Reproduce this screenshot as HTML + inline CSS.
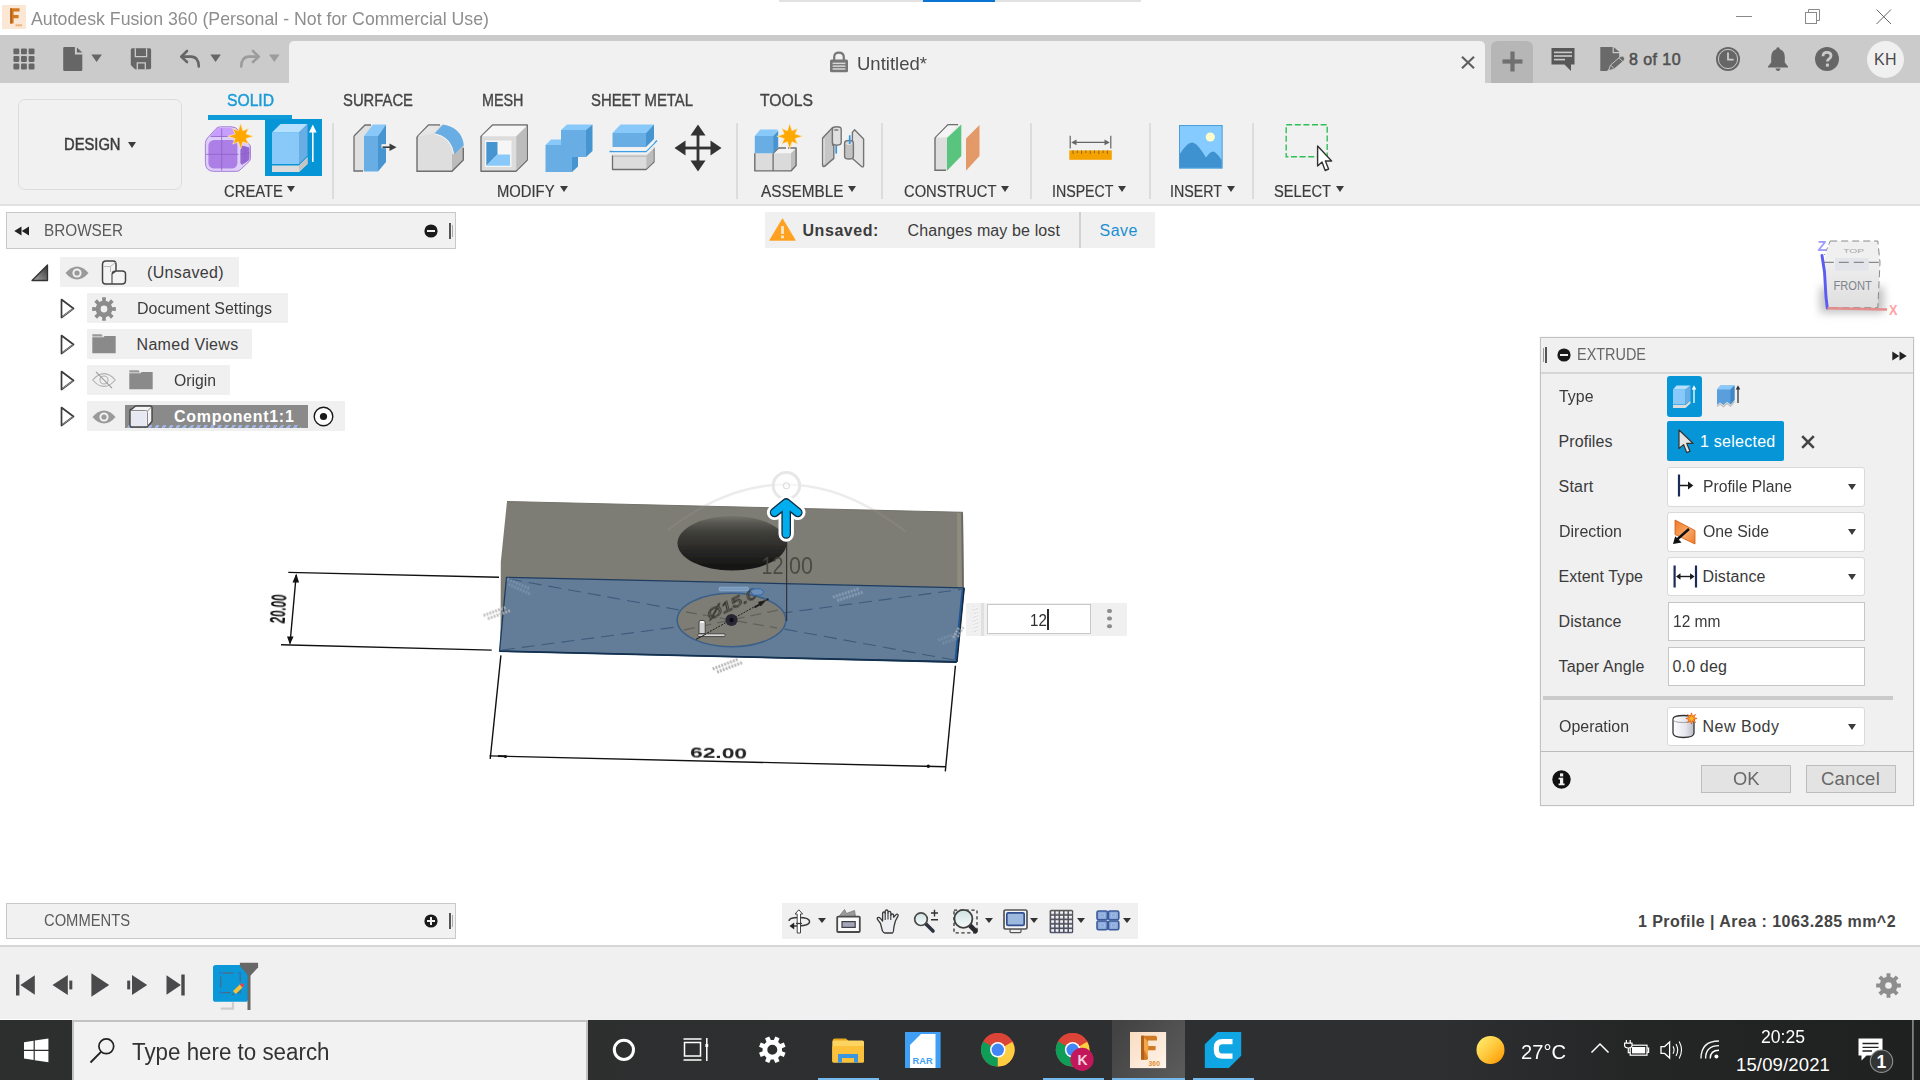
<!DOCTYPE html>
<html><head><meta charset="utf-8">
<style>
*{box-sizing:border-box;margin:0;padding:0}
html,body{width:1920px;height:1080px;overflow:hidden;background:#fff}
body{font-family:"Liberation Sans",sans-serif;position:relative;color:#3c3c3c}
.a{position:absolute}
.t{position:absolute;white-space:nowrap;line-height:1;transform-origin:0 50%}
svg{position:absolute;overflow:visible}
.sep{position:absolute;width:2px;background:#dcdcdc;top:123px;height:76px}
.dd{position:absolute;left:1666.6px;width:198.4px;height:40px;background:#fff;border:1.6px solid #d9d9d9;border-radius:3px}
.lbl{position:absolute;left:1558px;font-size:16px;white-space:nowrap;line-height:1;color:#3a3a3a}
.car{position:absolute;width:0;height:0;border-left:4.5px solid transparent;border-right:4.5px solid transparent;border-top:6px solid #3c3c3c}
</style></head><body>

<!-- ===== TITLE BAR ===== -->
<div class="a" id="titlebar" style="left:0;top:0;width:1920px;height:35px;background:#fff"></div>
<div class="a" style="left:779px;top:0;width:362px;height:2px;background:#e2e2e2"></div>
<div class="a" style="left:923px;top:0;width:72px;height:2px;background:#0a74d4"></div>

<div class="a" style="left:2px;top:5px;width:24px;height:24px;background:#fbe7d6"></div>
<svg style="left:2px;top:5px" width="24" height="24" viewBox="0 0 24 24"><path d="M8.2 3.2 H17.6 V6.6 H11.6 V10 H16.6 V13.2 H11.6 V18.6 H8.2 Z" fill="#d27a22"></path><path d="M8.2 3.2 H10 V18.6 H8.2Z" fill="#b8621a"></path><rect x="13.5" y="19.3" width="6.5" height="2" fill="#eeb47a"></rect></svg>
<span class="t" style="font-size: 19px; color: rgb(142, 142, 142); letter-spacing: 0px; left: 31px; transform: scaleX(0.9327); top: 9.3px;">Autodesk Fusion 360 (Personal - Not for Commercial Use)</span>
<div class="a" style="left:1736px;top:16px;width:16px;height:1px;background:#8a8a8a"></div>
<svg style="left:1804px;top:8px" width="18" height="18" viewBox="0 0 18 18" fill="none" stroke="#8a8a8a" stroke-width="1"><rect x="1.5" y="4.5" width="11" height="11"></rect><path d="M4.5 4.5V1.5H15.5V12.5H12.5"></path></svg>
<svg style="left:1875px;top:8px" width="18" height="18" viewBox="0 0 18 18" fill="none" stroke="#666" stroke-width="1"><path d="M1.5 1.5L16 16M16 1.5L1.5 16"></path></svg>


<!-- ===== GREY BAND / TABS ===== -->
<div class="a" style="left:0;top:35px;width:1920px;height:48px;background:#cbcbcb"></div>
<div class="a" style="left:289px;top:40.7px;width:1196px;height:42.3px;background:#f1f1f1;border-radius:5px 5px 0 0"></div>
<div class="a" style="left:1491px;top:41px;width:42px;height:42px;background:#b6b6b6;border-radius:6px 6px 0 0"></div>

<!-- grid -->
<svg style="left:0;top:40px" width="300" height="40" viewBox="0 40 300 40">
<g fill="#666"><rect x="13.4" y="48.4" width="5.9" height="5.9" rx="1.1"></rect><rect x="21" y="48.4" width="5.9" height="5.9" rx="1.1"></rect><rect x="28.6" y="48.4" width="5.9" height="5.9" rx="1.1"></rect><rect x="13.4" y="56" width="5.9" height="5.9" rx="1.1"></rect><rect x="21" y="56" width="5.9" height="5.9" rx="1.1"></rect><rect x="28.6" y="56" width="5.9" height="5.9" rx="1.1"></rect><rect x="13.4" y="63.6" width="5.9" height="5.9" rx="1.1"></rect><rect x="21" y="63.6" width="5.9" height="5.9" rx="1.1"></rect><rect x="28.6" y="63.6" width="5.9" height="5.9" rx="1.1"></rect></g>
<path d="M64.4 47H74.9V54.5H82.3V69.7Q82.3 70.9 81.1 70.9H64.4Q63.2 70.9 63.2 69.7V48.2Q63.2 47 64.4 47Z" fill="#666"></path><path d="M76.9 47.4L82.3 52.6H76.9Z" fill="#666"></path>
<path d="M91.3 54.6H101.9L96.6 62Z" fill="#666"></path>
<path d="M132.4 48.2H149.5Q151.1 48.2 151.1 49.8V67.7Q151.1 69.3 149.5 69.3H135L130.8 65V49.8Q130.8 48.2 132.4 48.2Z" fill="#666"></path>
<path d="M135.3 48.2V56.6H146.6V48.2M137.3 69.3V62.9H145.3V69.3" fill="none" stroke="#cbcbcb" stroke-width="1.3"></path>
<g fill="none" stroke="#666" stroke-width="2.6" stroke-linecap="round" stroke-linejoin="round"><path d="M187 51L181.2 56.6L187 62"></path><path d="M182 56.6H191.5Q198.5 57 198.8 66.5"></path></g>
<path d="M210.3 54.6H220.9L215.6 62Z" fill="#666"></path>
<g fill="none" stroke="#9c9c9c" stroke-width="2.6" stroke-linecap="round" stroke-linejoin="round"><path d="M253 51L258.8 56.6L253 62"></path><path d="M258 56.6H248.5Q241.5 57 241.2 66.5"></path></g>
<path d="M269 54.6H279.6L274.3 62Z" fill="#9c9c9c"></path>
</svg>
<!-- doc tab content -->
<svg style="left:829px;top:51px" width="20" height="22" viewBox="0 0 20 22"><path d="M5.2 9V6.2Q5.2 1.6 10 1.6Q14.8 1.6 14.8 6.2V9" fill="none" stroke="#777" stroke-width="2.2"></path><rect x="1" y="8.6" width="18" height="12.6" rx="1.5" fill="#777"></rect><rect x="3.6" y="11.6" width="12.8" height="1.5" fill="#d8d8d8"></rect><rect x="3.6" y="14.4" width="12.8" height="1.5" fill="#d8d8d8"></rect><rect x="3.6" y="17.2" width="12.8" height="1.5" fill="#d8d8d8"></rect></svg>
<span class="t" style="font-size: 19px; color: rgb(74, 74, 74); letter-spacing: 0px; left: 857px; transform: scaleX(0.9745); top: 53.6px;">Untitled*</span>
<svg style="left:1461px;top:56px" width="14" height="13" viewBox="0 0 14 13" fill="none" stroke="#5e5e5e" stroke-width="2.1"><path d="M1 0.8L13 12.2M13 0.8L1 12.2"></path></svg>
<!-- plus -->
<svg style="left:1502px;top:51px" width="21" height="21" viewBox="0 0 21 21" fill="#707070"><rect x="8.4" y="0.5" width="4.2" height="20"></rect><rect x="0.5" y="8.4" width="20" height="4.2"></rect></svg>
<!-- comment -->
<svg style="left:1550px;top:47px" width="26" height="25" viewBox="0 0 26 25"><path d="M1.5 1H24.5V17.5H21V24L14.5 17.5H1.5Z" fill="#585858"></path><rect x="4" y="4.6" width="18" height="1.6" fill="#cbcbcb"></rect><rect x="4" y="8.2" width="18" height="1.6" fill="#cbcbcb"></rect><rect x="4" y="11.8" width="11" height="1.6" fill="#cbcbcb"></rect></svg>
<!-- doc pencil -->
<svg style="left:1590px;top:40px" width="50" height="40" viewBox="1590 40 50 40">
<path d="M1600.3 46.9H1612.6V53.2H1619.2V58L1607 70.9H1600.3Z" fill="#6a6a6a"></path>
<path d="M1613.8 47.2L1619.4 52H1613.8Z" fill="#6a6a6a"></path>
<path d="M1608.6 70.6L1610.4 65.2L1620.4 56.6Q1622.4 55.4 1624 57Q1625.4 58.8 1624 60.6L1614 69.2Z" fill="#6a6a6a" stroke="#cbcbcb" stroke-width="0.9" stroke-linejoin="round"></path>
<path d="M1619 57.8L1622.8 61.6M1610.6 65L1614.2 68.8" stroke="#cbcbcb" stroke-width="0.9"></path>
</svg>
<span class="t" style="font-size: 16px; color: rgb(80, 80, 80); -webkit-text-stroke: 0.55px rgb(80, 80, 80); letter-spacing: 0.438px; left: 1629px; top: 51.8px;">8 of 10</span>
<!-- clock -->
<svg style="left:1715px;top:46px" width="26" height="26" viewBox="0 0 26 26"><circle cx="13" cy="13" r="12" fill="#666"></circle><circle cx="13" cy="13" r="9.6" fill="none" stroke="#cbcbcb" stroke-width="1"></circle><path d="M13 6.4V13.6H18.6" fill="none" stroke="#cbcbcb" stroke-width="1.8"></path></svg>
<!-- bell -->
<svg style="left:1767px;top:46px" width="22" height="26" viewBox="0 0 22 26" fill="#666"><path d="M11 1.2Q12.8 1.2 12.8 3.2Q17.8 4.8 17.8 11V16.5L21 20.4V21.4H1V20.4L4.2 16.5V11Q4.2 4.8 9.2 3.2Q9.2 1.2 11 1.2Z"></path><path d="M8.4 22.6H13.6Q13.2 25 11 25Q8.8 25 8.4 22.6Z"></path></svg>
<!-- help -->
<svg style="left:1815px;top:47px" width="24" height="24" viewBox="0 0 24 24"><circle cx="12" cy="12" r="12" fill="#666"></circle><path d="M8 9.2Q8 5.4 12 5.4Q16 5.4 16 8.8Q16 10.8 14 11.9Q12.4 12.8 12.4 14.6" fill="none" stroke="#cbcbcb" stroke-width="2.8"></path><rect x="10.9" y="16.6" width="3" height="3" fill="#cbcbcb"></rect></svg>
<!-- avatar -->
<div class="a" style="left:1866.5px;top:40.5px;width:37px;height:37px;border-radius:50%;background:#f0f0f0"></div>
<span class="t" style="font-size: 16px; color: rgb(74, 74, 74); letter-spacing: 0.383px; left: 1874px; top: 51.8px;">KH</span>


<!-- ===== RIBBON ===== -->
<div class="a" style="left:0;top:83px;width:1920px;height:122px;background:#f1f1f1"></div>
<div class="a" style="left:0;top:204.3px;width:1920px;height:2.1px;background:#e2e2e2"></div>

<div class="a" style="left:17.5px;top:98.5px;width:164px;height:91px;border:1.5px solid #dcdcdc;border-radius:7px"></div>
<span class="t" style="font-size: 16px; color: rgb(60, 60, 60); -webkit-text-stroke: 0.5px rgb(60, 60, 60); letter-spacing: 0px; left: 63.5px; transform: scaleX(0.921); top: 137.3px;">DESIGN</span>
<div class="car" style="left:127.5px;top:142px"></div>
<span class="t" style="font-size: 16px; color: rgb(26, 155, 216); -webkit-text-stroke: 0.45px rgb(26, 155, 216); letter-spacing: 0px; left: 226.5px; transform: scaleX(0.9788); top: 93.2px;">SOLID</span>
<span class="t" style="font-size: 16px; color: rgb(69, 69, 69); -webkit-text-stroke: 0.35px rgb(69, 69, 69); letter-spacing: 0px; left: 342.5px; transform: scaleX(0.9262); top: 93.2px;">SURFACE</span>
<span class="t" style="font-size: 16px; color: rgb(69, 69, 69); -webkit-text-stroke: 0.35px rgb(69, 69, 69); letter-spacing: 0px; left: 481.5px; transform: scaleX(0.8976); top: 93.2px;">MESH</span>
<span class="t" style="font-size: 16px; color: rgb(69, 69, 69); -webkit-text-stroke: 0.35px rgb(69, 69, 69); letter-spacing: 0px; left: 591px; transform: scaleX(0.9302); top: 93.2px;">SHEET METAL</span>
<span class="t" style="font-size: 16px; color: rgb(69, 69, 69); -webkit-text-stroke: 0.35px rgb(69, 69, 69); letter-spacing: 0px; left: 760px; transform: scaleX(0.9823); top: 93.2px;">TOOLS</span>
<div class="a" style="left:207.5px;top:115px;width:84.5px;height:4.5px;background:#0e9bd8"></div>
<div class="a" style="left:265.4px;top:119px;width:57.1px;height:57px;background:#0696d7"></div>

<span class="t" style="font-size: 16px; color: rgb(60, 60, 60); -webkit-text-stroke: 0.2px rgb(60, 60, 60); letter-spacing: 0px; left: 224px; transform: scaleX(0.9259); top: 183.8px;">CREATE</span><div class="car" style="left:286.5px;top:186.4px"></div>
<span class="t" style="font-size: 16px; color: rgb(60, 60, 60); -webkit-text-stroke: 0.2px rgb(60, 60, 60); letter-spacing: 0px; left: 497px; transform: scaleX(0.9242); top: 183.8px;">MODIFY</span><div class="car" style="left:559.5px;top:186.4px"></div>
<span class="t" style="font-size: 16px; color: rgb(60, 60, 60); -webkit-text-stroke: 0.2px rgb(60, 60, 60); letter-spacing: 0px; left: 760.5px; transform: scaleX(0.9563); top: 183.8px;">ASSEMBLE</span><div class="car" style="left:847.5px;top:186.4px"></div>
<span class="t" style="font-size: 16px; color: rgb(60, 60, 60); -webkit-text-stroke: 0.2px rgb(60, 60, 60); letter-spacing: 0px; left: 903.5px; transform: scaleX(0.921); top: 183.8px;">CONSTRUCT</span><div class="car" style="left:1000.5px;top:186.4px"></div>
<span class="t" style="font-size: 16px; color: rgb(60, 60, 60); -webkit-text-stroke: 0.2px rgb(60, 60, 60); letter-spacing: 0px; left: 1051.5px; transform: scaleX(0.8869); top: 183.8px;">INSPECT</span><div class="car" style="left:1117.5px;top:186.4px"></div>
<span class="t" style="font-size: 16px; color: rgb(60, 60, 60); -webkit-text-stroke: 0.2px rgb(60, 60, 60); letter-spacing: 0px; left: 1170px; transform: scaleX(0.8906); top: 183.8px;">INSERT</span><div class="car" style="left:1227px;top:186.4px"></div>
<span class="t" style="font-size: 16px; color: rgb(60, 60, 60); -webkit-text-stroke: 0.2px rgb(60, 60, 60); letter-spacing: 0px; left: 1273.5px; transform: scaleX(0.9157); top: 183.8px;">SELECT</span><div class="car" style="left:1335.5px;top:186.4px"></div>

<div class="sep" style="left:332px"></div><div class="sep" style="left:735.5px"></div><div class="sep" style="left:880.5px"></div>
<div class="sep" style="left:1030px"></div><div class="sep" style="left:1148.5px"></div><div class="sep" style="left:1252px"></div>

<!-- Form -->
<svg style="left:200px;top:115px" width="60" height="65" viewBox="200 115 60 65">
<path d="M205.4 143.5Q205.4 140.5 207.5 138L216 128.6Q217.8 126.8 220.5 126.8H231Q236 126.8 238 130L250.4 146V158.3Q250.4 160 249 161.6L240 170Q238.6 171.3 236.5 171.3H214Q205.4 171.3 205.4 162.5Z" fill="#e0cefa" stroke="#a47cd6" stroke-width="1"></path>
<path d="M216 129.2Q217.2 128 219.5 128H230Q233 128 234 130L236.5 136.4H210Z" fill="#c79dff"></path>
<rect x="208.4" y="140" width="29" height="28.6" rx="5.6" fill="#ab7fe6"></rect>
<path d="M240.4 147Q240.4 145.2 242 145.6L249.4 147.6V158Q249.4 159.6 248.2 160.8L242.6 164.6Q240.4 165 240.4 162.6Z" fill="#9568d2"></path>
<path d="M221.7 128.4V170.6M206 154.3H238.6M240.4 154.3L249.6 152.8M245.2 146.6V162.6M210.6 136.6L236.6 136.4" stroke="#8e60c6" stroke-width="0.9" fill="none" opacity="0.9"></path>
<polygon points="240.6,123.5 242.9,130.8 248.4,128.5 246.1,134.0 253.4,136.3 246.1,138.6 248.4,144.1 242.9,141.8 240.6,149.1 238.3,141.8 232.8,144.1 235.1,138.6 227.8,136.3 235.1,134.0 232.8,128.5 238.3,130.8" fill="#ffa900" stroke="#f8e6c0" stroke-width="0.7"></polygon>
</svg>
<!-- Extrude -->
<svg style="left:265.5px;top:119px" width="57" height="57" viewBox="0 0 57 57">
<path d="M6 46.5H33L41.5 38V45L33 53H6Z" fill="#dcdcdc"></path><path d="M33 46.5L41.5 38V45L33 53Z" fill="#c4c4c4"></path>
<path d="M6 13.5H33V45H6Z" fill="#88c9fa"></path><path d="M6 13.5L14.5 5H41.5L33 13.5Z" fill="#b5dffd"></path><path d="M33 13.5L41.5 5V36.5L33 45Z" fill="#68aee4"></path>
<path d="M46.8 12V43" stroke="#fff" stroke-width="1.6"></path><path d="M46.8 5.5L50.6 13.5H43Z" fill="#fff"></path>
</svg>
<!-- Press Pull -->
<svg style="left:352.5px;top:123.5px" width="48" height="48" viewBox="0 0 48 48">
<path d="M1 12L12 1H22V47H1Z" fill="#e0e0e0"></path><path d="M1 12L12 1H18" fill="none" stroke="#6e6e6e" stroke-width="1.3"></path><path d="M1 12V47H10" fill="none" stroke="#6e6e6e" stroke-width="1.3"></path>
<path d="M11 12H25V47.5H11Z" fill="#68aee4"></path><path d="M11 12L20 0.5H33L25 12Z" fill="#88c9fa"></path><path d="M25 12L33 0.5V38L25 47.5Z" fill="#4795d0"></path>
<path d="M28.5 22.2H38" stroke="#f0f0f0" stroke-width="4"></path><path d="M29.5 23.2H38" stroke="#3c3c3c" stroke-width="1.6"></path><path d="M36.5 19.5L43.5 23.2L36.5 27Z" fill="#3c3c3c"></path>
</svg>
<!-- Fillet -->
<svg style="left:415.5px;top:123.5px" width="48" height="48" viewBox="0 0 48 48">
<path d="M1 13L12.5 1H26L47.5 22V36L36 47.5H1Z" fill="#dedede"></path>
<path d="M36 30L47.5 21V36L36 47.5Z" fill="#bcbcbc"></path>
<path d="M1 13L12.5 1H24" fill="none" stroke="#6e6e6e" stroke-width="1.4"></path><path d="M1 13V47.3H36L47.3 36V24" fill="none" stroke="#6e6e6e" stroke-width="1.4"></path>
<path d="M1.8 12.5L12.8 1.8H24L17 9.5Z" fill="#e6e6e6"></path>
<path d="M27 0.5Q46 4 47.8 21L38 30.5Q36 13 18.5 9.5Z" fill="#68aee4"></path>
<path d="M18.5 9.8Q35.5 13 37.6 30.5" fill="none" stroke="#f4f4f4" stroke-width="1"></path>
</svg>
<!-- Shell -->
<svg style="left:480px;top:123.5px" width="48" height="48" viewBox="0 0 48 48">
<path d="M1 12.5L12.5 1H47.3V36L36 47.3H1Z" fill="#dcdcdc" stroke="#6e6e6e" stroke-width="1.4" stroke-linejoin="round"></path>
<path d="M1.7 12.3L12.8 1.7H46.5L36 12.3Z" fill="#f6f6f6"></path><path d="M36.3 12.6L46.6 2.4V35.6L36.3 46.6Z" fill="#bcbcbc"></path>
<rect x="5" y="16.5" width="26.5" height="26.5" fill="#f6f6f6"></rect>
<path d="M6.3 18H17.5V30.5L6.3 41.7Z" fill="#4795d0"></path><path d="M6.3 41.7L17.5 30.5H30V41.7Z" fill="#88c9fa"></path>
</svg>
<!-- Combine -->
<svg style="left:544.5px;top:123.5px" width="48" height="48" viewBox="0 0 48 48">
<path d="M16 6L22 0.5H47.5L41 6Z" fill="#88c9fa"></path><path d="M41 6L47.5 0.5V27L41 33Z" fill="#4795d0"></path><rect x="16" y="6" width="25" height="27" fill="#68aee4"></rect>
<path d="M0.5 21L6 15.5H16V21Z" fill="#88c9fa"></path><path d="M27 33H33L27 39Z" fill="#4795d0"></path><path d="M27 33V48L33 42.5V33Z" fill="#4795d0"></path>
<path d="M0.5 21H16V33H27V48H0.5Z" fill="#68aee4"></path>
</svg>
<!-- Offset face -->
<svg style="left:608.5px;top:123.5px" width="48" height="48" viewBox="0 0 48 48">
<path d="M3.5 9L11.5 0.5H45L37 9Z" fill="#88c9fa"></path><path d="M37 9L45 0.5V15L37 23Z" fill="#4795d0"></path><rect x="3.5" y="9" width="33.5" height="14" fill="#68aee4"></rect>
<path d="M0.5 27.5H37L48 16.5" fill="none" stroke="#3d9ee8" stroke-width="1.5"></path><path d="M3.5 26H37L45 18" fill="none" stroke="#f6f6f6" stroke-width="1.3"></path>
<path d="M3.5 31.5H37L45 24V38L37 45.5H3.5Z" fill="#dcdcdc" stroke="#6e6e6e" stroke-width="1.3" stroke-linejoin="round"></path><path d="M37.4 31.8L44.4 25V37.6L37.4 44.8Z" fill="#bcbcbc"></path>
<path d="M3.5 31H37L45 23.5" fill="none" stroke="#f0f0f0" stroke-width="1.6"></path>
</svg>
<!-- Move -->
<svg style="left:673.5px;top:123.5px" width="48" height="48" viewBox="0 0 48 48" fill="#333">
<rect x="22.6" y="8" width="2.8" height="32"></rect><rect x="8" y="22.6" width="32" height="2.8"></rect>
<path d="M24 0.5L31.5 11.5H16.5Z"></path><path d="M24 47.5L31.5 36.5H16.5Z"></path><path d="M0.5 24L11.5 16.5V31.5Z"></path><path d="M47.5 24L36.5 16.5V31.5Z"></path>
</svg>
<!-- New Component -->
<svg style="left:745px;top:115px" width="130" height="65" viewBox="745 115 130 65">
<path d="M754.8 153.3H773.1V170.9H754.8Z" fill="#dcdcdc"></path>
<path d="M773.1 153.3L778.8 147.8H796.1L791 153.3Z" fill="#f4f4f4"></path><path d="M773.1 153.3H791V170.9H773.1Z" fill="#dadada"></path><path d="M791 153.3L796.1 148.2V165.4L791 170.9Z" fill="#bdbdbd"></path>
<path d="M754.8 153.3V170.9H791L796.1 165.4V148H788" fill="none" stroke="#6e6e6e" stroke-width="1.4" stroke-linejoin="round"></path><path d="M773.1 153.3V170.9" stroke="#6e6e6e" stroke-width="1.3"></path><path d="M773.1 153.3L778.6 148H786" fill="none" stroke="#6e6e6e" stroke-width="1.3"></path>
<path d="M754.8 136L760.2 129.6H778.2L773.1 136Z" fill="#88c9fa"></path><path d="M754.8 136H773.1V153.3H754.8Z" fill="#68aee4"></path><path d="M773.1 136L778.2 130.5V147L773.1 153.3Z" fill="#4795d0"></path>
<polygon points="789.7,123.5 792.0,130.8 797.5,128.5 795.2,134.0 802.5,136.3 795.2,138.6 797.5,144.1 792.0,141.8 789.7,149.1 787.4,141.8 781.9,144.1 784.2,138.6 776.9,136.3 784.2,134.0 781.9,128.5 787.4,130.8" fill="#ffa900" stroke="#f8e6c0" stroke-width="0.7"></polygon>
<!-- Joint -->
<g stroke="#747474" stroke-width="1.4" stroke-linejoin="round">
<path d="M822.6 138L832.6 127.6V145H833.8V158.4L824.6 166.4Q822.6 167 822.6 165Z" fill="#c6c6c6"></path>
<path d="M832.4 129.4Q832.4 126.8 836.8 126.8Q841.2 126.8 841.2 129.4V142.6Q841.2 145.2 836.8 145.2Q832.4 145.2 832.4 142.6Z" fill="#e0e0e0"></path>
<path d="M852.4 132.4L854.6 129.8L863.6 139V165.4Q863.6 167.6 861.6 166.6L852.4 158.4Z" fill="#e2e2e2"></path>
<path d="M844.6 143Q844.6 140.4 849 140.4Q853.4 140.4 853.4 143V156.4Q853.4 159 849 159Q844.6 159 844.6 156.4Z" fill="#c2c2c2"></path>
</g>
<ellipse cx="836.3" cy="130" rx="2.4" ry="1" fill="#8a8a8a"></ellipse><ellipse cx="849" cy="143.6" rx="3.2" ry="1.3" fill="#dedede"></ellipse>
<path d="M824 139V164" stroke="#ececec" stroke-width="1"></path>
<path d="M836.2 146V153.6" stroke="#2e97e6" stroke-width="1.7"></path><path d="M849.7 135.3V144" stroke="#2e97e6" stroke-width="1.7"></path>
</svg>
<!-- Construct -->
<svg style="left:934px;top:123.5px" width="47" height="48" viewBox="0 0 47 48">
<path d="M1 14L14 0.7H25L13 14V46.5H1Z" fill="#dedede"></path><path d="M1 14L14 0.7H24" fill="none" stroke="#6e6e6e" stroke-width="1.4"></path><path d="M1 14V46.3H12" fill="none" stroke="#6e6e6e" stroke-width="1.4"></path><path d="M2 13.5L14 1.5H24L13 13.5Z" fill="#f4f4f4"></path>
<path d="M13 14L27.3 0.5V32L13 46.8Z" fill="#58c47e"></path>
<path d="M32 14.5L45.5 1V32L32 46.8Z" fill="#e39a68"></path>
</svg>
<!-- Inspect -->
<svg style="left:1069px;top:135px" width="44" height="26" viewBox="0 0 44 26">
<rect x="0.3" y="15.4" width="42.5" height="9.4" fill="#f5a200"></rect>
<path d="M4 15.4V19M8.3 15.4V18M12.6 15.4V19M16.9 15.4V18M21.2 15.4V19M25.5 15.4V18M29.8 15.4V19M34.1 15.4V18M38.4 15.4V19" stroke="#8a6a20" stroke-width="1"></path>
<path d="M1.2 0.7V13.6M41.8 0.7V13.6" stroke="#666" stroke-width="1.2"></path><path d="M5 7.4H38" stroke="#666" stroke-width="1.2"></path><path d="M2.2 7.4L7.5 4.6V10.2Z M40.8 7.4L35.5 4.6V10.2Z" fill="#666"></path>
</svg>
<!-- Insert -->
<svg style="left:1179px;top:125px" width="44" height="44" viewBox="0 0 44 44">
<rect x="0" y="0" width="43.5" height="43.5" fill="#86cbff"></rect>
<path d="M0.8 29Q8 17.5 13 17.5Q18 17.5 27 32.5Q31 26.5 34 26.5Q37 26.5 42.7 35V42.7H0.8Z" fill="#3e92cf"></path>
<rect x="0.4" y="0.4" width="42.7" height="42.7" fill="none" stroke="#3e92cf" stroke-width="0.8"></rect>
<circle cx="31.3" cy="12" r="4.6" fill="#fffccc"></circle>
</svg>
<!-- Select -->
<svg style="left:1285px;top:123.5px" width="48" height="48" viewBox="0 0 48 48">
<rect x="1.2" y="0.8" width="41" height="32" fill="none" stroke="#2fbf58" stroke-width="1.4" stroke-dasharray="6 2.6"></rect>
<path d="M32.6 22V42L37 38L40.2 46.5L43.6 45L40.4 37H46.6Z" fill="#fff" stroke="#333" stroke-width="1.4" stroke-linejoin="round"></path>
</svg>


<!-- ===== CANVAS ===== -->

<div class="a" style="left:6px;top:212px;width:450px;height:37px;background:#f1f1f1;border:1.4px solid #c8c8c8"></div>
<svg style="left:13.5px;top:226px" width="16" height="10" viewBox="0 0 16 10" fill="#222"><path d="M0.3 5L7.5 0.5V9.5Z"></path><path d="M7.8 5L15 0.5V9.5Z"></path></svg>
<span class="t" style="font-size: 16px; color: rgb(90, 90, 90); letter-spacing: 0px; left: 43.5px; transform: scaleX(0.9556); top: 223.3px;">BROWSER</span>
<svg style="left:424px;top:224px" width="14" height="14" viewBox="0 0 14 14"><circle cx="7" cy="7" r="6.6" fill="#1a1a1a"></circle><rect x="3" y="6" width="8" height="2" fill="#f0f0f0"></rect></svg>
<div class="a" style="left:449px;top:222.5px;width:1.5px;height:16px;background:#555"></div><div class="a" style="left:451.5px;top:224.5px;width:1px;height:12px;background:#aaa"></div>

<div class="a" style="left:60px;top:257px;width:178.5px;height:30px;background:#f0f0f0"></div>
<svg style="left:31px;top:263.5px" width="18" height="18" viewBox="0 0 18 18"><defs><linearGradient id="tg" x1="0" y1="1" x2="1" y2="0"><stop offset="0" stop-color="#aaa"></stop><stop offset="1" stop-color="#333"></stop></linearGradient></defs><path d="M1 16.5L16.5 1V16.5Z" fill="url(#tg)" stroke="#333" stroke-width="1.3" stroke-linejoin="round"></path></svg>
<svg style="left:64.5px;top:265.5px" width="24" height="14" viewBox="0 0 24 14"><path d="M0.5 7Q6 0.5 12 0.5Q18 0.5 23.5 7Q18 13.5 12 13.5Q6 13.5 0.5 7Z" fill="#9a9a9a"></path><circle cx="12" cy="7" r="4.6" fill="#f0f0f0"></circle><circle cx="12" cy="7" r="2.6" fill="#9a9a9a"></circle></svg>
<svg style="left:101px;top:259.5px" width="26" height="25" viewBox="0 0 26 25" fill="#f4f4f4" stroke="#444" stroke-width="1.5" stroke-linejoin="round"><path d="M1.5 4.5Q1.5 1 5 1H12Q15 1 15 4.5V11H21Q24.5 11 24.5 14V20.5Q24.5 24 21 24H4.5Q1.5 24 1.5 20.5Z"></path><path d="M11 24V14.5Q11 11 14 11M11 14L15 11" fill="none" stroke-width="1.1"></path><path d="M2 6.5H9.5L14.5 2.5M9.5 6.5V12" fill="none" stroke="#bbb" stroke-width="1"></path></svg>
<span class="t" style="font-size: 16px; color: rgb(60, 60, 60); letter-spacing: 0.354px; left: 147px; top: 265.3px;">(Unsaved)</span>

<div class="a" style="left:87px;top:293px;width:201px;height:30px;background:#f0f0f0"></div>
<svg style="left:59.5px;top:298px" width="16" height="21" viewBox="0 0 16 21"><path d="M1.5 1.5L13.5 10.5L1.5 19.5Z" fill="#fff" stroke="#3c3c3c" stroke-width="1.7" stroke-linejoin="round"></path><path d="M2.5 18.5L13 10.8" stroke="#999" stroke-width="1" fill="none"></path></svg>
<svg style="left:91.5px;top:296.5px" width="24" height="24" viewBox="0 0 24 24"><path d="M20.20,10.20 L23.85,10.12 L23.85,13.88 L20.20,13.80 L19.07,16.53 L21.71,19.05 L19.05,21.71 L16.53,19.07 L13.80,20.20 L13.88,23.85 L10.12,23.85 L10.20,20.20 L7.47,19.07 L4.95,21.71 L2.29,19.05 L4.93,16.53 L3.80,13.80 L0.15,13.88 L0.15,10.12 L3.80,10.20 L4.93,7.47 L2.29,4.95 L4.95,2.29 L7.47,4.93 L10.20,3.80 L10.12,0.15 L13.88,0.15 L13.80,3.80 L16.53,4.93 L19.05,2.29 L21.71,4.95 L19.07,7.47Z M15.4,12 A3.4,3.4 0 1,0 8.6,12 A3.4,3.4 0 1,0 15.4,12Z" fill="#8c8c8c" fill-rule="evenodd"></path></svg>
<span class="t" style="font-size: 16px; color: rgb(60, 60, 60); letter-spacing: 0px; left: 136.5px; transform: scaleX(0.9986); top: 301.1px;">Document Settings</span>

<div class="a" style="left:87px;top:329px;width:165px;height:30px;background:#f0f0f0"></div>
<svg style="left:59.5px;top:334px" width="16" height="21" viewBox="0 0 16 21"><path d="M1.5 1.5L13.5 10.5L1.5 19.5Z" fill="#fff" stroke="#3c3c3c" stroke-width="1.7" stroke-linejoin="round"></path><path d="M2.5 18.5L13 10.8" stroke="#999" stroke-width="1" fill="none"></path></svg>
<svg style="left:91.5px;top:334px" width="24" height="20" viewBox="0 0 24 20"><path d="M0.3 0.3H9.5L11 2.4H0.3Z" fill="#9a9a9a"></path><path d="M0.3 3.2H11.5L12.5 2H23.7V19.2H0.3Z" fill="#8a8a8a"></path></svg>
<span class="t" style="font-size: 16px; color: rgb(60, 60, 60); letter-spacing: 0.325px; left: 136.5px; top: 337.3px;">Named Views</span>

<div class="a" style="left:87px;top:365px;width:142.5px;height:30px;background:#f0f0f0"></div>
<svg style="left:59.5px;top:370px" width="16" height="21" viewBox="0 0 16 21"><path d="M1.5 1.5L13.5 10.5L1.5 19.5Z" fill="#fff" stroke="#3c3c3c" stroke-width="1.7" stroke-linejoin="round"></path><path d="M2.5 18.5L13 10.8" stroke="#999" stroke-width="1" fill="none"></path></svg>
<svg style="left:91.5px;top:371px" width="24" height="18" viewBox="0 0 24 18" fill="none" stroke="#b0b0b0" stroke-width="1.1"><path d="M0.8 9Q6 2.6 12 2.6Q18 2.6 23.2 9Q18 15.4 12 15.4Q6 15.4 0.8 9Z"></path><circle cx="12" cy="9" r="4"></circle><path d="M4 0.8L20 17.2" stroke="#999"></path></svg>
<svg style="left:129px;top:370px" width="24" height="20" viewBox="0 0 24 20"><path d="M0.3 0.3H9.5L11 2.4H0.3Z" fill="#9a9a9a"></path><path d="M0.3 3.2H11.5L12.5 2H23.7V19.2H0.3Z" fill="#8a8a8a"></path></svg>
<span class="t" style="font-size: 16px; color: rgb(60, 60, 60); letter-spacing: 0px; left: 174px; transform: scaleX(0.9839); top: 373.3px;">Origin</span>

<div class="a" style="left:87px;top:401px;width:258px;height:30px;background:#f0f0f0"></div>
<svg style="left:59.5px;top:406px" width="16" height="21" viewBox="0 0 16 21"><path d="M1.5 1.5L13.5 10.5L1.5 19.5Z" fill="#fff" stroke="#3c3c3c" stroke-width="1.7" stroke-linejoin="round"></path><path d="M2.5 18.5L13 10.8" stroke="#999" stroke-width="1" fill="none"></path></svg>
<svg style="left:91.5px;top:409.5px" width="24" height="14" viewBox="0 0 24 14"><path d="M0.5 7Q6 0.5 12 0.5Q18 0.5 23.5 7Q18 13.5 12 13.5Q6 13.5 0.5 7Z" fill="#9a9a9a"></path><circle cx="12" cy="7" r="4.6" fill="#f0f0f0"></circle><circle cx="12" cy="7" r="2.6" fill="#9a9a9a"></circle></svg>
<div class="a" style="left:124.5px;top:404.5px;width:183px;height:23px;background:#8a8a8a"></div>
<div class="a" style="left:124.5px;top:424.5px;width:176px;height:3px;background:repeating-linear-gradient(120deg,#8a8a8a 0 3px,#9fb4e2 3px 6px)"></div>
<svg style="left:129px;top:405px" width="24" height="23" viewBox="0 0 24 23" stroke="#444" stroke-width="1.4" stroke-linejoin="round"><path d="M1 6Q1 4 3 4L6.5 1H21Q23 1 23 3V16.5L19 21Q18.5 22 16.5 22H3Q1 22 1 20Z" fill="#f4f4f4"></path><path d="M2 5.5H16.5Q18.5 5.5 18.5 7.5V21M18.5 6L22.5 2" fill="none" stroke="#888" stroke-width="1"></path><path d="M2 6.5H17.5V21H2Z" fill="#e6e9f2" stroke="none"></path></svg>
<span class="t" style="font-size: 16px; color: rgb(255, 255, 255); font-weight: bold; letter-spacing: 0.708px; left: 174px; top: 409.1px;">Component1:1</span>
<svg style="left:313px;top:406px" width="21" height="21" viewBox="0 0 21 21"><circle cx="10.5" cy="10.5" r="9.3" fill="#fff" stroke="#1a1a1a" stroke-width="1.4"></circle><circle cx="10.5" cy="10.5" r="3.6" fill="#1a1a1a"></circle></svg>


<div class="a" style="left:765px;top:212px;width:390px;height:35.5px;background:#f0f0f0"></div>
<svg style="left:769px;top:217.5px" width="27" height="23" viewBox="0 0 27 23"><path d="M13.5 0.8L26.3 22.3H0.7Z" fill="#ffa11f" stroke="#ffa11f" stroke-width="0.8" stroke-linejoin="round"></path><rect x="12.1" y="8" width="2.8" height="8" fill="#fbe6c8"></rect><rect x="12.1" y="17.5" width="2.8" height="2.8" fill="#fbe6c8"></rect></svg>
<span class="t" style="font-size: 16px; color: rgb(60, 60, 60); font-weight: bold; letter-spacing: 0.559px; left: 802.5px; top: 223.3px;">Unsaved:</span>
<span class="t" style="font-size: 16px; color: rgb(60, 60, 60); letter-spacing: 0.115px; left: 907.5px; top: 223.3px;">Changes may be lost</span>
<div class="a" style="left:1078.5px;top:212px;width:2.5px;height:35.5px;background:#d2d2d2"></div>
<span class="t" style="font-size: 16px; color: rgb(27, 143, 209); letter-spacing: 0.508px; left: 1099.5px; top: 223.3px;">Save</span>


<svg style="left:0;top:0" width="1920" height="1080" viewBox="0 0 1920 1080">
<defs>
<linearGradient id="gb" x1="0" y1="0" x2="1" y2="0"><stop offset="0" stop-color="#75736c"></stop><stop offset="0.5" stop-color="#7f7d76"></stop><stop offset="1" stop-color="#87857d"></stop></linearGradient>
<linearGradient id="hg" x1="0" y1="0" x2="0" y2="1"><stop offset="0" stop-color="#74736b"></stop><stop offset="0.12" stop-color="#5a5953"></stop><stop offset="0.3" stop-color="#403f3b"></stop><stop offset="0.6" stop-color="#2a2927"></stop><stop offset="1" stop-color="#121211"></stop></linearGradient>
<filter id="b1" x="-20%" y="-20%" width="140%" height="140%"><feGaussianBlur stdDeviation="0.45"></feGaussianBlur></filter>
<filter id="b2" x="-20%" y="-20%" width="140%" height="140%"><feGaussianBlur stdDeviation="1.2"></feGaussianBlur></filter>
</defs>
<!-- arc + ring -->
<path d="M668 530Q786 438 906 532" fill="none" stroke="#ececec" stroke-width="2.4"></path>
<!-- grey block -->
<path d="M507 501.5L963 512.3L963.8 588L506.5 578L500 651L500.6 625L500.8 562Z" fill="#7e7d75"></path><path d="M957 512.1L961.3 512.2L962 588L957.3 587.8Z" fill="#8e8b7f"></path><path d="M961.3 512.2L963 512.3L963.8 588L962 588Z" fill="#6b6963"></path><path d="M507 501.5L963 512.3" stroke="#74736b" stroke-width="1" fill="none"></path>
<!-- arc over block (faint) -->
<clipPath id="cb"><path d="M507 501.5L963 512.3L963.8 588L506.5 578Z"></path></clipPath><path d="M668 530Q786 438 906 532" fill="none" stroke="#8b8982" stroke-width="2.2" opacity="0.55" clip-path="url(#cb)"></path>
<!-- hole -->
<ellipse cx="732" cy="543.3" rx="54.5" ry="27.3" fill="url(#hg)" filter="url(#b1)"></ellipse>
<!-- blue face -->
<path d="M506.5 577.3L964 587.8L956.5 662L499.5 651.2Z" fill="#637c97" stroke="#1d3c5f" stroke-width="1.3" stroke-linejoin="round"></path>
<path d="M499.5 651.2L956.5 662" stroke="#12304f" stroke-width="1.8" fill="none"></path>
<path d="M962.6 588.5L955.3 660.5" stroke="#1d5595" stroke-width="1.8" fill="none"></path><path d="M964.2 588L957 662" stroke="#15273a" stroke-width="1.4" fill="none"></path>
<!-- diagonals -->
<path d="M509 579L954 660M502 650L961 589.5" stroke="#3d5b7c" stroke-width="1.1" stroke-dasharray="13 7" fill="none"></path>
<!-- ellipse on face -->
<ellipse cx="731.5" cy="620" rx="54.3" ry="26.7" fill="#7e7d75" stroke="#3a5f8a" stroke-width="1.5"></ellipse>
<path d="M686 612L777 628M684 630L778 610" stroke="#62625c" stroke-width="1.3" stroke-dasharray="11 6" fill="none"></path>
<!-- small blue marks -->
<!-- diag dim -->
<path d="M696 639.3L767.8 599.3" stroke="#1d1d1d" stroke-width="1" stroke-dasharray="2 1.2"></path>
<path d="M765.5 600.6L758.5 602.2L760.6 606Z" fill="#1d1d1d" stroke="#1d1d1d" stroke-width="0.8"></path><path d="M754.5 607.5L760 604.3" stroke="#1d1d1d" stroke-width="1.8"></path><circle cx="767.6" cy="599.4" r="1.1" fill="#1d1d1d"></circle>
<g transform="translate(709,620.5) rotate(-25.5) skewX(-12)"><text x="0" y="0" font-family="Liberation Sans,sans-serif" font-size="15" fill="#8a8982" stroke="#34332f" stroke-width="0.9" textLength="54" lengthAdjust="spacingAndGlyphs" filter="url(#b1)">Ø15.0</text></g>
<rect x="719" y="587.2" width="29.5" height="3.6" rx="1.2" fill="#7998ba" stroke="#8db4dc" stroke-width="0.8"></rect>
<path d="M750 590.5L755 588.8H760.5L764 591.8L761 595.2H753.5Z" fill="#6d8fb6" stroke="#2d69b0" stroke-width="1"></path>
<!-- centre dot -->
<circle cx="731.5" cy="620" r="6.1" fill="#2a2735"></circle><circle cx="731.5" cy="620" r="2.2" fill="#0c0c10"></circle>
<!-- origin marker -->
<path d="M698.6 633.8H724.6Q725.8 635.2 724.6 636.6H698.2Q697 635.2 698.6 633.8Z" fill="#d8d8d8" stroke="#3c3c3c" stroke-width="0.9"></path><path d="M699 622Q699 620.4 702 620.4Q705.2 620.4 705.2 622V633.6H699Z" fill="#cfcfcf" stroke="#3c3c3c" stroke-width="0.9"></path><ellipse cx="702.1" cy="622" rx="2.2" ry="0.9" fill="#fff"></ellipse>
<path d="M697 639L706 634" stroke="#222" stroke-width="1"></path>
<!-- vertical dim -->
<path d="M786.7 541V621" stroke="#26262a" stroke-width="1"></path>
<text x="761.5" y="574" font-family="Liberation Sans,sans-serif" font-size="23" fill="#45443f" opacity="0.88" textLength="22" lengthAdjust="spacingAndGlyphs">12</text>
<text x="789" y="574" font-family="Liberation Sans,sans-serif" font-size="23" fill="#45443f" opacity="0.88" textLength="24" lengthAdjust="spacingAndGlyphs">00</text>
<!-- ring -->
<circle cx="786.4" cy="485.7" r="13.2" fill="#fff" fill-opacity="0.6" stroke="#e7e7e7" stroke-width="3"></circle>
<circle cx="786.4" cy="485.7" r="3" fill="none" stroke="#dedede" stroke-width="1.1"></circle>
<!-- arrow -->
<g fill="none" stroke-linejoin="round" stroke-linecap="round">
<path d="M774.6 512.4L786.2 503L797.8 512.4M786.2 505V534" stroke="#fff" stroke-width="15.4"></path>
<path d="M774.6 512.4L786.2 503L797.8 512.4M786.2 505V534" stroke="#0e2c40" stroke-width="9.6"></path>
<path d="M774.6 512.4L786.2 503L797.8 512.4M786.2 505V534" stroke="#00aeef" stroke-width="7"></path>
</g>
<!-- hatches -->
<g transform="translate(727.5,665.7) rotate(-21)" stroke="#b0b0b0" stroke-width="3" stroke-dasharray="1.8 1.3" opacity="1" fill="none" filter="url(#b1)"><path d="M-15.0 -2.3H12.0M-12.0 2.3H15.0"></path></g><g transform="translate(848.5,594.5) rotate(-18)" stroke="#8fa5bd" stroke-width="3" stroke-dasharray="1.8 1.3" opacity="0.9" fill="none" filter="url(#b1)"><path d="M-15.5 -2.3H12.5M-12.5 2.3H15.5"></path></g><g transform="translate(519,586.5) rotate(24)" stroke="#8098b2" stroke-width="3" stroke-dasharray="1.8 1.3" opacity="0.8" fill="none" filter="url(#b1)"><path d="M-13.5 -2.3H10.5M-10.5 2.3H13.5"></path></g><g transform="translate(497,613) rotate(-20)" stroke="#b4b4b4" stroke-width="3" stroke-dasharray="1.8 1.3" opacity="0.9" fill="none" filter="url(#b1)"><path d="M-13.5 -2.3H10.5M-10.5 2.3H13.5"></path></g><g transform="translate(958.5,632) rotate(-60)" stroke="#b8b8b8" stroke-width="3" stroke-dasharray="1.8 1.3" opacity="0.9" fill="none" filter="url(#b1)"><path d="M-7.5 -2.0H4.5M-4.5 2.0H7.5"></path></g><g transform="translate(948,639) rotate(-20)" stroke="#7f97b0" stroke-width="3" stroke-dasharray="1.8 1.3" opacity="0.7" fill="none" filter="url(#b1)"><path d="M-9.5 -2.3H6.5M-6.5 2.3H9.5"></path></g>
<!-- left dim 20.00 -->
<g stroke="#111" stroke-width="1.4" fill="none">
<path d="M288.3 572.4L499 577.3"></path><path d="M281 644.8L491.7 650.1"></path><path d="M296.2 575L290 643.5"></path>
<path d="M500.9 655.4L490.2 759"></path><path d="M955.4 665.7L945.3 771.4"></path><path d="M489.5 755.9L945.9 766.8"></path>
</g>
<path d="M296.3 573.5L299 582.5H292.5Z M289.9 644.5L287 636.5H293.6Z" fill="#111"></path>
<circle cx="505.5" cy="756.6" r="1.5" fill="#111"></circle><circle cx="928.3" cy="766.3" r="1.7" fill="#111"></circle><path d="M498 756L506 756.4" stroke="#111" stroke-width="1.8"></path>
<g transform="translate(284.6,623.8) rotate(-86)" filter="url(#b1)"><text x="0" y="0" font-family="Liberation Sans,sans-serif" font-size="22.5" font-weight="bold" fill="#111" textLength="29" lengthAdjust="spacingAndGlyphs">20.00</text></g>
<g transform="translate(690,757.4) rotate(1.2)" filter="url(#b1)"><text x="0" y="0" font-family="Liberation Sans,sans-serif" font-size="14" font-weight="bold" fill="#222" textLength="57" lengthAdjust="spacingAndGlyphs">62.00</text></g>
</svg>
<!-- floating input -->
<div class="a" style="left:966.3px;top:602.8px;width:160.6px;height:33px;background:#f0f0f0"></div><div class="a" style="left:981.2px;top:602.8px;width:2.8px;height:33px;background:#e0e0e0"></div>
<div class="a" style="left:972.5px;top:606px;width:5px;height:27px;background:repeating-linear-gradient(160deg,#e0e0e0 0 1.2px,#f3f3f3 1.2px 3.4px);opacity:.9"></div>
<div class="a" style="left:986.8px;top:604.4px;width:104px;height:29.6px;background:#fff;border:1.3px solid #c8c8c8"></div>
<span class="t" style="font-size: 16px; color: rgb(46, 46, 46); letter-spacing: 0px; left: 1030px; transform: scaleX(0.944); top: 612.8px;">12</span>
<div class="a" style="left:1047px;top:609px;width:1.8px;height:20.6px;background:#2a2a2a"></div>
<div class="a" style="left:1107.4px;top:609px;width:4.2px;height:4.2px;border-radius:50%;background:#8c8c8c;box-shadow:0 7.6px 0 #8c8c8c,0 15.2px 0 #8c8c8c"></div>


<svg style="left:1800px;top:225px" width="120" height="105" viewBox="0 0 120 105">
<defs><filter id="vb" x="-50%" y="-50%" width="200%" height="200%"><feGaussianBlur stdDeviation="4"></feGaussianBlur></filter><linearGradient id="vf" x1="0" y1="0" x2="0" y2="1"><stop offset="0" stop-color="#efefef"></stop><stop offset="1" stop-color="#dedede"></stop></linearGradient></defs>
<path d="M20 62H84V88H20Z" fill="#9a9a9a" opacity="0.6" filter="url(#vb)"></path>
<path d="M30.2 16H77.8L80 37.3H23.8Z" fill="#f0f0f0"></path>
<path d="M23.8 37.3H80L77.8 82.7H26.3Z" fill="url(#vf)"></path>
<rect x="35" y="33" width="33.6" height="12.7" fill="#e3e5ea"></rect>
<path d="M30.2 16H77.8L80 37.3L77.8 82.7H26.3" fill="none" stroke="#8a8a8a" stroke-width="1" stroke-dasharray="7 4"></path>
<path d="M30.2 16L24.5 30" fill="none" stroke="#8a8a8a" stroke-width="1" stroke-dasharray="4 3"></path>
<path d="M23.8 37.3H80" fill="none" stroke="#8a8a8a" stroke-width="1.2" stroke-dasharray="10 5" stroke-dashoffset="-15"></path>
<path d="M22 30.5L24.5 47L26 72L27.3 83" fill="none" stroke="#5c5cf0" stroke-width="2.9" stroke-linecap="round"></path>
<path d="M27.5 83.2L52 83.8L87 84.6" fill="none" stroke="#e58c8c" stroke-width="2.5"></path>
<text x="17.6" y="25.6" font-family="Liberation Sans,sans-serif" font-size="14.5" font-weight="bold" fill="#9c9cff">Z</text>
<text x="89" y="89.6" font-family="Liberation Sans,sans-serif" font-size="14.5" font-weight="bold" fill="#ffa2a2" textLength="8.5" lengthAdjust="spacingAndGlyphs">X</text>
<text x="33.4" y="65.4" font-family="Liberation Sans,sans-serif" font-size="12" fill="#7e848c" textLength="38.4" lengthAdjust="spacingAndGlyphs">FRONT</text>
<g transform="translate(43.2,27.8) scale(1,0.42)"><text x="0" y="0" font-family="Liberation Sans,sans-serif" font-size="12" fill="#a8a8a8" textLength="21" lengthAdjust="spacingAndGlyphs">TOP</text></g>
</svg>


<div class="a" style="left:1539.5px;top:337px;width:374px;height:468.5px;background:#f0f0f0;border:1px solid #c2c2c2;box-shadow:0 0 1px #ccc"></div>
<div class="a" style="left:1540.5px;top:372px;width:372px;height:1.5px;background:#d6d6d6"></div>
<div class="a" style="left:1542.5px;top:348px;width:1px;height:14px;background:#999"></div><div class="a" style="left:1545px;top:347px;width:1.5px;height:16px;background:#555"></div>
<svg style="left:1557px;top:348px" width="14" height="14" viewBox="0 0 14 14"><circle cx="7" cy="7" r="6.6" fill="#1a1a1a"></circle><rect x="3" y="6" width="8" height="2" fill="#f0f0f0"></rect></svg>
<span class="t" style="font-size: 16px; color: rgb(102, 102, 102); letter-spacing: 0px; left: 1576.5px; transform: scaleX(0.9025); top: 347.1px;">EXTRUDE</span>
<svg style="left:1891.5px;top:350.5px" width="15" height="10" viewBox="0 0 15 10" fill="#222"><path d="M0.3 0.5L7.3 5L0.3 9.5Z"></path><path d="M7.5 0.5L14.7 5L7.5 9.5Z"></path></svg>

<span class="t" style="font-size: 16px; color: rgb(58, 58, 58); letter-spacing: 0px; left: 1558.5px; transform: scaleX(0.9946); top: 388.7px;">Type</span><span class="t" style="font-size: 16px; color: rgb(58, 58, 58); letter-spacing: 0.08px; left: 1558.5px; top: 434.3px;">Profiles</span><span class="t" style="font-size: 16px; color: rgb(58, 58, 58); letter-spacing: 0.241px; left: 1558.5px; top: 479.3px;">Start</span><span class="t" style="font-size: 16px; color: rgb(58, 58, 58); letter-spacing: 0px; left: 1558.5px; transform: scaleX(0.9978); top: 524.3px;">Direction</span>
<span class="t" style="font-size: 16px; color: rgb(58, 58, 58); letter-spacing: 0.027px; left: 1558.5px; top: 569.3px;">Extent Type</span><span class="t" style="font-size: 16px; color: rgb(58, 58, 58); letter-spacing: 0.094px; left: 1558.5px; top: 613.9px;">Distance</span><span class="t" style="font-size: 16px; color: rgb(58, 58, 58); letter-spacing: 0.135px; left: 1558.5px; top: 658.9px;">Taper Angle</span><span class="t" style="font-size: 16px; color: rgb(58, 58, 58); letter-spacing: 0px; left: 1558.5px; transform: scaleX(0.9962); top: 718.9px;">Operation</span>

<!-- type buttons -->
<div class="a" style="left:1667px;top:375.5px;width:35px;height:41px;background:#0696d7;border-radius:3px"></div>
<svg style="left:1671.5px;top:384px" width="26" height="25" viewBox="0 0 26 25"><path d="M1 21H13.5L18.5 16.5V19.5L13.5 24H1Z" fill="#dcdcdc"></path><path d="M1 5.5H13.5V20.5H1Z" fill="#88c9fa"></path><path d="M1 5.5L4.5 1.5H18.5L13.5 5.5Z" fill="#b5dffd"></path><path d="M13.5 5.5L18.5 1.5V16L13.5 20.5Z" fill="#68aee4"></path><path d="M22 5V19" stroke="#fff" stroke-width="1.3"></path><path d="M22 1.2L24.3 5.6H19.7Z" fill="#fff"></path></svg>
<svg style="left:1715.5px;top:384px" width="26" height="25" viewBox="0 0 26 25"><path d="M1 5.5L4.5 1.5H18.5V16L14.5 20.5L11 18L7.5 21L4 18.5L1 21Z" fill="#5a9fdc"></path><path d="M1 5.5L4.5 1.5H18.5L14.5 5.5Z" fill="#88c9fa"></path><path d="M14.5 5.5L18.5 1.5V16L14.5 20.5Z" fill="#3f86c6"></path><path d="M1 22.5L4 20L7.5 22.5L11 19.5L14.5 22L18.5 17.5" fill="none" stroke="#c0c0c0" stroke-width="1.4"></path><path d="M22 5V19" stroke="#333" stroke-width="1.3"></path><path d="M22 1.2L24.3 5.6H19.7Z" fill="#333"></path></svg>
<!-- profiles -->
<div class="a" style="left:1667px;top:421px;width:117px;height:40px;background:#0696d7;border-radius:2px"></div>
<svg style="left:1677.5px;top:428.5px" width="17" height="25" viewBox="0 0 17 25"><path d="M1 1V19.5L5.6 15.6L8.8 23.6L12 22.3L8.8 14.4H15Z" fill="#e4e4e4" stroke="#333" stroke-width="1.2" stroke-linejoin="round"></path></svg>
<span class="t" style="font-size: 16px; color: rgb(255, 255, 255); letter-spacing: 0.256px; left: 1700px; top: 434.3px;">1 selected</span>
<svg style="left:1801px;top:435px" width="14" height="14" viewBox="0 0 14 14" fill="none" stroke="#444" stroke-width="2.6"><path d="M1.2 1.2L12.8 12.8M12.8 1.2L1.2 12.8"></path></svg>
<!-- start -->
<div class="dd" style="top:466.5px"></div>
<svg style="left:1676.5px;top:474px" width="18" height="23" viewBox="0 0 18 23"><path d="M2 0.5V22.5" stroke="#1b2b5c" stroke-width="2.2"></path><path d="M3 11.5H13" stroke="#1a1a1a" stroke-width="1.5"></path><path d="M11 7.5L16.3 11.5L11 15.5Z" fill="#1a1a1a"></path></svg>
<span class="t" style="font-size: 16px; color: rgb(58, 58, 58); letter-spacing: 0px; left: 1702.5px; transform: scaleX(0.9811); top: 479.3px;">Profile Plane</span><div class="car" style="left:1847.5px;top:483.5px;border-left-width:4.8px;border-right-width:4.8px"></div>
<!-- direction -->
<div class="dd" style="top:511.5px"></div>
<svg style="left:1672px;top:518.5px" width="25" height="26" viewBox="0 0 25 26"><defs><linearGradient id="og" x1="0" y1="0" x2="1" y2="1"><stop offset="0" stop-color="#f07820"></stop><stop offset="0.55" stop-color="#f8a868"></stop><stop offset="1" stop-color="#ee7a28"></stop></linearGradient></defs><path d="M3 1L23 11.5V25L3 15.5Z" fill="url(#og)" stroke="#d05c10" stroke-width="0.8"></path><path d="M17 10L4.5 21" stroke="#111" stroke-width="2.4"></path><path d="M1 25L3.2 17.2L9.6 23.6Z" fill="#111"></path></svg>
<span class="t" style="font-size: 16px; color: rgb(58, 58, 58); letter-spacing: 0px; left: 1702.5px; transform: scaleX(0.9892); top: 524.3px;">One Side</span><div class="car" style="left:1847.5px;top:528.5px;border-left-width:4.8px;border-right-width:4.8px"></div>
<!-- extent -->
<div class="dd" style="top:556.5px;height:39.5px"></div>
<svg style="left:1672.5px;top:564.5px" width="25" height="23" viewBox="0 0 25 23"><path d="M1.6 0.5V22.5M23 0.5V22.5" stroke="#1b2b5c" stroke-width="2.2"></path><path d="M5 11.5H20" stroke="#1a1a1a" stroke-width="1.4"></path><path d="M3 11.5L7.5 8.3V14.7Z M21.6 11.5L17.1 8.3V14.7Z" fill="#1a1a1a"></path></svg>
<span class="t" style="font-size: 16px; color: rgb(58, 58, 58); letter-spacing: 0.094px; left: 1702.5px; top: 569.3px;">Distance</span><div class="car" style="left:1847.5px;top:573.5px;border-left-width:4.8px;border-right-width:4.8px"></div>
<!-- inputs -->
<div class="dd" style="top:602px;height:38.5px;left:1668.2px;width:196.4px;border:1.3px solid #c6c6c6;border-radius:0"></div>
<span class="t" style="font-size: 16px; color: rgb(58, 58, 58); letter-spacing: 0px; left: 1672.5px; transform: scaleX(0.9712); top: 613.9px;">12 mm</span>
<div class="dd" style="top:647px;height:38.5px;left:1668.2px;width:196.4px;border:1.3px solid #c6c6c6;border-radius:0"></div>
<span class="t" style="font-size: 16px; color: rgb(58, 58, 58); letter-spacing: 0.158px; left: 1672.5px; top: 658.9px;">0.0 deg</span>
<div class="a" style="left:1542.5px;top:695.5px;width:350.5px;height:4px;background:#cacaca"></div>
<!-- operation -->
<div class="dd" style="top:706.5px;height:39.5px"></div>
<svg style="left:1672px;top:713px" width="26" height="26" viewBox="0 0 26 26"><defs><linearGradient id="cg" x1="0" y1="0" x2="1" y2="0"><stop offset="0" stop-color="#fff"></stop><stop offset="0.6" stop-color="#e4e6ec"></stop><stop offset="1" stop-color="#b8bcc8"></stop></linearGradient></defs><path d="M1 6Q1 2.5 11.5 2.5Q22 2.5 22 6V20Q22 24.5 11.5 24.5Q1 24.5 1 20Z" fill="url(#cg)" stroke="#333" stroke-width="1.3"></path><path d="M1 6Q1 9.5 11.5 9.5Q22 9.5 22 6" fill="none" stroke="#999" stroke-width="0.9"></path><polygon points="19.5,-0.1 20.4,3.3 23.5,1.5 21.7,4.6 25.1,5.5 21.7,6.4 23.5,9.5 20.4,7.7 19.5,11.1 18.6,7.7 15.5,9.5 17.3,6.4 13.9,5.5 17.3,4.6 15.5,1.5 18.6,3.3" fill="#ffb020" stroke="#e85a10" stroke-width="0.8"></polygon></svg>
<span class="t" style="font-size: 16px; color: rgb(58, 58, 58); letter-spacing: 0.51px; left: 1702.5px; top: 718.9px;">New Body</span><div class="car" style="left:1847.5px;top:723.7px;border-left-width:4.8px;border-right-width:4.8px"></div>
<div class="a" style="left:1540.5px;top:750.5px;width:372px;height:1px;background:#bcbcbc"></div>
<svg style="left:1552px;top:769.5px" width="19" height="19" viewBox="0 0 19 19"><circle cx="9.5" cy="9.5" r="9.2" fill="#111"></circle><rect x="8" y="3.4" width="3.2" height="3" fill="#f0f0f0"></rect><path d="M6.6 7.8H11.2V13.4H12.6V15.2H6.6V13.4H8V9.6H6.6Z" fill="#f0f0f0"></path></svg>
<div class="a" style="left:1701px;top:764.5px;width:90px;height:28px;background:#e3e3e3;border:1px solid #bdbdbd"></div>
<span class="t" style="font-size: 18.5px; color: rgb(104, 104, 104); letter-spacing: 0px; left: 1732.5px; transform: scaleX(0.9912); top: 770px;">OK</span>
<div class="a" style="left:1806px;top:764.5px;width:90px;height:28px;background:#e3e3e3;border:1px solid #bdbdbd"></div>
<span class="t" style="font-size: 18.5px; color: rgb(104, 104, 104); letter-spacing: 0.234px; left: 1821px; top: 770px;">Cancel</span>


<div class="a" style="left:782px;top:903px;width:356px;height:35.5px;background:#f0f0f0"></div>
<!-- orbit -->
<svg style="left:786px;top:908.5px" width="25" height="25" viewBox="0 0 25 25"><path d="M3 12Q3 8.6 12.5 8.6Q23.6 8.6 23.6 12.8Q23.6 16.5 13 17H7" fill="none" stroke="#3a3a3a" stroke-width="1.5"></path><path d="M3.5 17L8.2 13.6V20.6Z" fill="#222"></path><path d="M12.8 0.8L16.6 5H14.5V24H11.2V5H9Z" fill="#fff" stroke="#444" stroke-width="1"></path><path d="M10 14.5H16" stroke="#3a3a3a" stroke-width="1.3"></path></svg>
<div class="car" style="left:818px;top:918.2px;border-top-color:#333;border-left-width:4.5px;border-right-width:4.5px;border-top-width:5.6px"></div>
<!-- look at -->
<svg style="left:835.5px;top:909px" width="25" height="24" viewBox="0 0 25 24"><path d="M3 7.5L8.5 0.5L10.5 4.5L18.5 1.5L19.5 7.5Z" fill="#9a9a9a" stroke="#777" stroke-width="0.8"></path><rect x="1.2" y="7.6" width="22.6" height="15.4" rx="1" fill="#fafafa" stroke="#4a4a4a" stroke-width="1.8"></rect><rect x="6" y="12.6" width="13.2" height="5.8" fill="#a2a6b8" stroke="#3f3f46" stroke-width="1.2"></rect></svg>
<!-- hand -->
<svg style="left:875px;top:908.5px" width="25" height="25" viewBox="0 0 25 25"><path d="M5.5 14.5L3 11.2Q1.6 9.4 2.8 8.6Q4 7.8 5.4 9.4L7.6 12V4.6Q7.6 3 8.9 3Q10.2 3 10.2 4.6V2.6Q10.2 1 11.6 1Q13 1 13 2.6V3.8Q13 2.4 14.4 2.4Q15.8 2.4 15.8 3.8V6.4Q16 5 17.3 5Q18.6 5 18.6 6.6V8.2L21 5.6Q22 4.6 22.8 5.4Q23.6 6.2 22.8 7.4L20.4 12Q19.4 15.6 18.8 18.6Q18.6 23.8 17.4 24H10Q8.6 24 7.4 21.8Z" fill="#eceef2" stroke="#3a3a3a" stroke-width="1.3" stroke-linejoin="round"></path><path d="M10.2 4.6V11M13 3.8V10.6M15.8 6.4V11" stroke="#3a3a3a" stroke-width="1.1" fill="none"></path></svg>
<!-- zoom -->
<svg style="left:913px;top:908.5px" width="26" height="25" viewBox="0 0 26 25"><defs><linearGradient id="lg" x1="0" y1="0" x2="0" y2="1"><stop offset="0" stop-color="#cfe2e2"></stop><stop offset="1" stop-color="#f6fafa"></stop></linearGradient></defs><path d="M13 15L20 22" stroke="#2f3340" stroke-width="3.6" stroke-linecap="round"></path><circle cx="8" cy="10.2" r="6.3" fill="url(#lg)" stroke="#4a4a4a" stroke-width="1.7"></circle><path d="M18 4H25M21.5 0.8V7.6M18 10.8H25" stroke="#333" stroke-width="1.4"></path></svg>
<!-- zoom window -->
<svg style="left:952.5px;top:908.5px" width="25" height="25" viewBox="0 0 25 25"><rect x="1" y="1.2" width="23" height="22.6" fill="none" stroke="#333" stroke-width="1.3" stroke-dasharray="3.2 2.6"></rect><path d="M16 15.5L22.5 22" stroke="#2a2a2e" stroke-width="4.6" stroke-linecap="round"></path><circle cx="10.4" cy="9.8" r="9" fill="url(#lg)" stroke="#3f3f3f" stroke-width="1.8"></circle></svg>
<div class="car" style="left:984.8px;top:918.2px;border-top-color:#333;border-left-width:4.5px;border-right-width:4.5px;border-top-width:5.6px"></div>
<!-- display -->
<svg style="left:1002.5px;top:908.5px" width="25" height="25" viewBox="0 0 25 25"><rect x="7" y="19.6" width="11" height="4" rx="1" fill="#f0f0f4" stroke="#555" stroke-width="1.2"></rect><rect x="1" y="1" width="23" height="19" rx="1.6" fill="#f6f6f6" stroke="#555" stroke-width="1.7"></rect><rect x="3.8" y="3.8" width="17.4" height="12.6" rx="1.4" fill="#9eb9de" stroke="#2f4f90" stroke-width="1.7"></rect></svg>
<div class="car" style="left:1030.4px;top:918.2px;border-top-color:#333;border-left-width:4.5px;border-right-width:4.5px;border-top-width:5.6px"></div>
<!-- grid -->
<svg style="left:1049px;top:908.5px" width="25" height="25" viewBox="0 0 25 25"><defs><linearGradient id="gg" x1="0" y1="0" x2="0" y2="1"><stop offset="0" stop-color="#5a5a5a"></stop><stop offset="1" stop-color="#4a4e62"></stop></linearGradient><linearGradient id="gw" x1="0" y1="0" x2="0" y2="1"><stop offset="0" stop-color="#fff"></stop><stop offset="0.5" stop-color="#f0f0f4"></stop><stop offset="1" stop-color="#b4b8c8"></stop></linearGradient></defs><rect x="0.6" y="0.8" width="23.6" height="23.4" rx="1.5" fill="url(#gg)"></rect><g fill="url(#gw)"><rect x="2.20" y="2.40" width="2.9" height="2.9"></rect><rect x="2.20" y="6.85" width="2.9" height="2.9"></rect><rect x="2.20" y="11.30" width="2.9" height="2.9"></rect><rect x="2.20" y="15.75" width="2.9" height="2.9"></rect><rect x="2.20" y="20.20" width="2.9" height="2.9"></rect><rect x="6.65" y="2.40" width="2.9" height="2.9"></rect><rect x="6.65" y="6.85" width="2.9" height="2.9"></rect><rect x="6.65" y="11.30" width="2.9" height="2.9"></rect><rect x="6.65" y="15.75" width="2.9" height="2.9"></rect><rect x="6.65" y="20.20" width="2.9" height="2.9"></rect><rect x="11.10" y="2.40" width="2.9" height="2.9"></rect><rect x="11.10" y="6.85" width="2.9" height="2.9"></rect><rect x="11.10" y="11.30" width="2.9" height="2.9"></rect><rect x="11.10" y="15.75" width="2.9" height="2.9"></rect><rect x="11.10" y="20.20" width="2.9" height="2.9"></rect><rect x="15.55" y="2.40" width="2.9" height="2.9"></rect><rect x="15.55" y="6.85" width="2.9" height="2.9"></rect><rect x="15.55" y="11.30" width="2.9" height="2.9"></rect><rect x="15.55" y="15.75" width="2.9" height="2.9"></rect><rect x="15.55" y="20.20" width="2.9" height="2.9"></rect><rect x="20.00" y="2.40" width="2.9" height="2.9"></rect><rect x="20.00" y="6.85" width="2.9" height="2.9"></rect><rect x="20.00" y="11.30" width="2.9" height="2.9"></rect><rect x="20.00" y="15.75" width="2.9" height="2.9"></rect><rect x="20.00" y="20.20" width="2.9" height="2.9"></rect></g></svg>
<div class="car" style="left:1076.7px;top:918.2px;border-top-color:#333;border-left-width:4.5px;border-right-width:4.5px;border-top-width:5.6px"></div>
<!-- viewports -->
<svg style="left:1095.5px;top:909.5px" width="24" height="21" viewBox="0 0 24 21" fill="#8aa9d9" stroke="#3b5b9c" stroke-width="1.6"><rect x="1" y="1" width="10.4" height="8.8" rx="1.6"></rect><rect x="12.4" y="1" width="10.4" height="8.8" rx="1.6"></rect><rect x="1" y="11" width="10.4" height="8.8" rx="1.6"></rect><rect x="12.4" y="11" width="10.4" height="8.8" rx="1.6"></rect><g stroke="#a9c2e6" stroke-width="0.8" fill="none"><rect x="4" y="3.8" width="4.4" height="3.2"></rect><rect x="15.4" y="3.8" width="4.4" height="3.2"></rect><rect x="4" y="13.8" width="4.4" height="3.2"></rect><rect x="15.4" y="13.8" width="4.4" height="3.2"></rect></g></svg>
<div class="car" style="left:1123px;top:918.2px;border-top-color:#333;border-left-width:4.5px;border-right-width:4.5px;border-top-width:5.6px"></div>
<!-- comments -->
<div class="a" style="left:6px;top:902.5px;width:450px;height:36.5px;background:#f1f1f1;border:1.4px solid #c8c8c8"></div>
<span class="t" style="font-size: 16px; color: rgb(90, 90, 90); letter-spacing: 0px; left: 43.5px; transform: scaleX(0.9215); top: 913.1px;">COMMENTS</span>
<svg style="left:424px;top:913.5px" width="14" height="14" viewBox="0 0 14 14"><circle cx="7" cy="7" r="6.6" fill="#1a1a1a"></circle><rect x="3" y="6" width="8" height="2" fill="#f0f0f0"></rect><rect x="6" y="3" width="2" height="8" fill="#f0f0f0"></rect></svg>
<div class="a" style="left:449px;top:912.5px;width:1.5px;height:16px;background:#555"></div><div class="a" style="left:451.5px;top:914.5px;width:1px;height:12px;background:#aaa"></div>
<span class="t" style="font-size: 16px; color: rgb(68, 68, 68); font-weight: bold; letter-spacing: 0.451px; left: 1638px; top: 913.8px;">1 Profile | Area : 1063.285 mm^2</span>


<!-- ===== TIMELINE ===== -->
<div class="a" style="left:0;top:945px;width:1920px;height:75px;background:#f0f0f0;border-top:2px solid #d6d6d6"></div>

<svg style="left:0;top:950px" width="280" height="70" viewBox="0 950 280 70">
<g fill="#4a4a4c"><rect x="16" y="974.5" width="3.4" height="21"></rect><path d="M34.8 975.3V994.7L20.4 985Z"></path>
<path d="M52.5 985L67.8 975V995Z"></path><rect x="69.3" y="980.6" width="3" height="8.8"></rect>
<path d="M91.4 973.3V996.7L109.2 985Z"></path>
<rect x="127.2" y="980.6" width="3" height="8.8"></rect><path d="M132 975V995L147.2 985Z"></path>
<path d="M166.5 975.3V994.7L180.9 985Z"></path><rect x="181.3" y="974.5" width="3.4" height="21"></rect></g>
<path d="M220.7 1008.7H233V1002.2" fill="none" stroke="#cdcdcd" stroke-width="2.2"></path>
<rect x="213" y="965" width="35" height="36.8" rx="2.6" fill="#0b98d9"></rect>
<rect x="220.6" y="973" width="19.6" height="19.6" fill="none" stroke="#466d8c" stroke-width="1.4" stroke-dasharray="11 4.5" stroke-dashoffset="-2"></rect>
<circle cx="220.6" cy="973" r="1.4" fill="#1f7fd0"></circle><circle cx="240.2" cy="973" r="1.4" fill="#1f7fd0"></circle><circle cx="220.6" cy="992.6" r="1.4" fill="#1f7fd0"></circle>
<path d="M233.2 993.4L231.6 995.2L234.2 994.6Z" fill="#555"></path><path d="M233 991L239.8 984.6L242.6 987.6L235.8 994Z" fill="#f4c23c"></path><path d="M239.8 984.6L241.2 983.4Q242.4 982.6 243.4 983.8Q244.4 985 243.6 986.2L242.6 987.6Z" fill="#e8434c"></path>
<path d="M239.9 962.8H258.1V967.5L250.6 975.5H248L239.9 966Z" fill="#676767"></path><rect x="247.5" y="970" width="3" height="40" fill="#676767"></rect>
</svg>
<svg style="left:1876px;top:972.5px" width="25" height="25" viewBox="0 0 24 24"><path d="M20.40,10.16 L23.85,10.12 L23.85,13.88 L20.40,13.84 L19.24,16.64 L21.71,19.05 L19.05,21.71 L16.64,19.24 L13.84,20.40 L13.88,23.85 L10.12,23.85 L10.16,20.40 L7.36,19.24 L4.95,21.71 L2.29,19.05 L4.76,16.64 L3.60,13.84 L0.15,13.88 L0.15,10.12 L3.60,10.16 L4.76,7.36 L2.29,4.95 L4.95,2.29 L7.36,4.76 L10.16,3.60 L10.12,0.15 L13.88,0.15 L13.84,3.60 L16.64,4.76 L19.05,2.29 L21.71,4.95 L19.24,7.36Z M15.2,12 A3.2,3.2 0 1,0 8.8,12 A3.2,3.2 0 1,0 15.2,12Z" fill="#8e8e8e" fill-rule="evenodd"></path></svg>


<!-- ===== TASKBAR ===== -->
<div class="a" style="left:0;top:1020px;width:1920px;height:60px;background:linear-gradient(90deg,#2d2f2e 0,#2e2f31 1440px,#242525 1640px,#1f2020 1920px)"></div>

<div class="a" style="left:0;top:1019px;width:72px;height:1px;background:#fff"></div><div class="a" style="left:72px;top:1020px;width:516px;height:60px;background:#f2f2f2;border:2px solid #c2c2c2;border-bottom:0"></div>
<div class="a" style="left:1112px;top:1020px;width:73px;height:60px;background:linear-gradient(125deg,#434343 10%,#5b5b5b 95%)"></div>
<div class="a" style="left:818px;top:1077.5px;width:60.5px;height:2.5px;background:#76b9ed"></div>
<div class="a" style="left:1043px;top:1077.5px;width:60.5px;height:2.5px;background:#76b9ed"></div>
<div class="a" style="left:1112px;top:1077.5px;width:73px;height:2.5px;background:#76b9ed"></div>
<div class="a" style="left:1193px;top:1077.5px;width:61px;height:2.5px;background:#76b9ed"></div>
<svg style="left:0;top:1020px" width="1920" height="60" viewBox="0 1020 1920 60">
<!-- windows -->
<path d="M24 1042.2L33.6 1040.8V1049.8H24Z M34.8 1040.6L48.4 1038.6V1049.8H34.8Z M24 1051H33.6V1060L24 1058.6Z M34.8 1051H48.4V1062.2L34.8 1060.2Z" fill="#fff"></path>
<!-- search icon -->
<circle cx="106.3" cy="1046.3" r="7.4" fill="none" stroke="#222" stroke-width="1.7"></circle><path d="M101 1051.8L90.5 1062.5" stroke="#222" stroke-width="1.9"></path>
<!-- cortana -->
<circle cx="623.9" cy="1049.8" r="9.6" fill="none" stroke="#fff" stroke-width="3"></circle>
<!-- task view -->
<g fill="none" stroke="#fff" stroke-width="1.5"><rect x="684.5" y="1042.5" width="16" height="13.5"></rect><path d="M683.5 1039H701.5M683.5 1060H701.5M706.8 1038V1044M706.8 1047V1061"></path></g><rect x="705.4" y="1044" width="2.8" height="3" fill="#fff"></rect>
<!-- settings -->
<path d="M781.99,1051.26 L785.55,1052.87 L783.84,1057.00 L780.18,1055.62 L778.12,1057.68 L779.50,1061.34 L775.37,1063.05 L773.76,1059.49 L770.84,1059.49 L769.23,1063.05 L765.10,1061.34 L766.48,1057.68 L764.42,1055.62 L760.76,1057.00 L759.05,1052.87 L762.61,1051.26 L762.61,1048.34 L759.05,1046.73 L760.76,1042.60 L764.42,1043.98 L766.48,1041.92 L765.10,1038.26 L769.23,1036.55 L770.84,1040.11 L773.76,1040.11 L775.37,1036.55 L779.50,1038.26 L778.12,1041.92 L780.18,1043.98 L783.84,1042.60 L785.55,1046.73 L781.99,1048.34Z M777.3,1049.8 A5,5 0 1,0 767.3,1049.8 A5,5 0 1,0 777.3,1049.8Z" fill="#fff" fill-rule="evenodd"></path>
<!-- explorer -->
<path d="M832.5 1041Q832.5 1038.5 835 1038.5H846L849 1041.5H832.5Z" fill="#e8a81e"></path><rect x="832.3" y="1040.5" width="31.7" height="22" rx="1.6" fill="#fcd462"></rect><path d="M832.3 1046H864V1060.9Q864 1062.5 862.4 1062.5H833.9Q832.3 1062.5 832.3 1060.9Z" fill="#fbc13a"></path><path d="M838 1054H858V1062.5H854V1058H842V1062.5H838Z" fill="#3a96e0"></path>
<!-- rar -->
<rect x="905" y="1032" width="35.6" height="36" fill="#3f9ff5"></rect><path d="M910 1068V1045L921 1034H935.5V1068Z" fill="#fff"></path><text x="912.6" y="1064" font-family="Liberation Sans,sans-serif" font-size="9.6" font-weight="bold" fill="#3f9ff5" textLength="20" lengthAdjust="spacingAndGlyphs">RAR</text>
<!-- chrome -->
<circle cx="997.8" cy="1049.8" r="16.8" fill="#db4437"></circle><path d="M997.8,1049.8 L1012.35,1041.40 A16.8,16.8 0 0,1 997.80,1066.60 Z" fill="#ffcd40"></path><path d="M997.8,1049.8 L997.80,1066.60 A16.8,16.8 0 0,1 983.25,1041.40 Z" fill="#0f9d58"></path><path d="M997.8,1049.8 L983.25,1041.40 A16.8,16.8 0 0,1 1012.35,1041.40 Z" fill="#db4437"></path><path d="M997.8,1049.8 L1004.35,1046.02 L1012.35,1041.40 L1014.43,1042.24 L997.8,1042.24Z" fill="#db4437"></path><path d="M997.8,1049.8 L997.80,1057.36 L997.80,1066.60 L1011.56,1059.44 L1004.35,1053.58Z" fill="#ffcd40"></path><path d="M997.8,1049.8 L991.25,1046.02 L983.25,1041.40 L982.97,1057.69 L991.25,1053.58Z" fill="#0f9d58"></path><circle cx="997.8" cy="1049.8" r="7.73" fill="#fff"></circle><circle cx="997.8" cy="1049.8" r="6.22" fill="#4285f4"></circle>
<circle cx="1072.6" cy="1049.8" r="16.8" fill="#db4437"></circle><path d="M1072.6,1049.8 L1087.15,1041.40 A16.8,16.8 0 0,1 1072.60,1066.60 Z" fill="#ffcd40"></path><path d="M1072.6,1049.8 L1072.60,1066.60 A16.8,16.8 0 0,1 1058.05,1041.40 Z" fill="#0f9d58"></path><path d="M1072.6,1049.8 L1058.05,1041.40 A16.8,16.8 0 0,1 1087.15,1041.40 Z" fill="#db4437"></path><path d="M1072.6,1049.8 L1079.15,1046.02 L1087.15,1041.40 L1089.23,1042.24 L1072.6,1042.24Z" fill="#db4437"></path><path d="M1072.6,1049.8 L1072.60,1057.36 L1072.60,1066.60 L1086.36,1059.44 L1079.15,1053.58Z" fill="#ffcd40"></path><path d="M1072.6,1049.8 L1066.05,1046.02 L1058.05,1041.40 L1057.77,1057.69 L1066.05,1053.58Z" fill="#0f9d58"></path><circle cx="1072.6" cy="1049.8" r="7.73" fill="#fff"></circle><circle cx="1072.6" cy="1049.8" r="6.22" fill="#4285f4"></circle>
<circle cx="1082" cy="1059.4" r="11.6" fill="#c2185b"></circle><text x="1077.4" y="1064.6" font-family="Liberation Sans,sans-serif" font-size="14" font-weight="bold" fill="#f4d0de">K</text>
<!-- fusion -->
<defs><linearGradient id="fb" x1="0" y1="0" x2="1" y2="1"><stop offset="0" stop-color="#f9dcc0"></stop><stop offset="0.55" stop-color="#fce9d8"></stop><stop offset="1" stop-color="#fff4ea"></stop></linearGradient></defs><rect x="1130" y="1032" width="36.1" height="36.1" fill="url(#fb)"></rect><g transform="translate(0,-2.3)"><path d="M1141 1038H1155Q1157 1038 1157 1040V1042.8H1148V1048.2H1155.6V1052.6H1148V1061.5Q1145 1063 1141 1061.5Z" fill="#cf7a24"></path><path d="M1141 1038H1144V1062H1141Z" fill="#b4601a"></path><path d="M1144 1040Q1150 1043 1148 1053L1148 1061Q1146 1055 1144 1052Z" fill="#f0a848"></path></g><text x="1148.6" y="1065.6" font-family="Liberation Sans,sans-serif" font-size="6.8" font-weight="bold" fill="#e28c34">360</text>
<!-- cura -->
<path d="M1217.5 1032H1241.2V1055.8L1228.8 1068H1204.8V1044.2Z" fill="#10a6e3"></path><path d="M1232.5 1041.6H1222.6Q1216.4 1041.6 1216.4 1047.6V1050.2Q1216.4 1056.2 1222.6 1056.2H1232.5" fill="none" stroke="#fff" stroke-width="5.2"></path>
<!-- sun -->
<defs><linearGradient id="sg" x1="0" y1="0" x2="1" y2="1"><stop offset="0.1" stop-color="#ffe96a"></stop><stop offset="0.5" stop-color="#ffc83c"></stop><stop offset="0.95" stop-color="#ff9800"></stop></linearGradient></defs><circle cx="1490.5" cy="1050" r="14" fill="url(#sg)"></circle>
<!-- tray -->
<path d="M1591.5 1052.5L1600 1044L1608.5 1052.5" fill="none" stroke="#fff" stroke-width="1.5"></path>
<g fill="none" stroke="#fff" stroke-width="1.2"><rect x="1630.2" y="1045.2" width="16.8" height="10"></rect><path d="M1647 1048H1648.6V1052.4H1647"></path><path d="M1626.4 1040V1043M1630.2 1040V1043"></path><path d="M1624.6 1043.2H1632V1045.6Q1632 1048 1628.3 1048Q1624.6 1048 1624.6 1045.6Z" fill="#222"></path><path d="M1628.3 1048V1052.6H1630"></path></g><rect x="1632" y="1047" width="13.2" height="6.4" fill="#fff"></rect>
<g fill="none" stroke="#fff" stroke-width="1.3"><path d="M1661 1046.6H1664.6L1669.6 1042V1058L1664.6 1053.4H1661Z"></path><path d="M1673 1046.4Q1675.2 1050 1673 1053.6M1676 1044Q1679.4 1050 1676 1056M1679.2 1041.6Q1683.8 1050 1679.2 1058.4" stroke-width="1.1"></path></g>
<g fill="none" stroke="#fff" stroke-width="1.4"><path d="M1701 1058.5Q1701 1041 1719 1041" opacity="0.95"></path><path d="M1705.6 1058.5Q1705.6 1045.6 1719 1045.6"></path><path d="M1710.2 1058.5Q1710.2 1050.2 1719 1050.2"></path></g><circle cx="1716.4" cy="1056.4" r="2" fill="#fff"></circle>
<!-- notif -->
<path d="M1858.5 1038.5H1882.5V1055.5H1866.5L1861.5 1060.5V1055.5H1858.5Z" fill="#fff"></path><path d="M1862.5 1043.5H1878.5M1862.5 1047.3H1878.5M1862.5 1051H1872" stroke="#222" stroke-width="1.3"></path>
<circle cx="1881.5" cy="1061.2" r="11.2" fill="#333434" stroke="#8c8c8c" stroke-width="1.1"></circle>
<text x="1876.6" y="1067.6" font-family="Liberation Sans,sans-serif" font-size="17.5" font-weight="bold" fill="#fff">1</text>
<rect x="1912.2" y="1020" width="1.4" height="60" fill="#9a9a9a"></rect>
</svg>
<span class="t" style="font-size: 23.5px; color: rgb(51, 51, 51); letter-spacing: 0px; left: 132px; transform: scaleX(0.9509); top: 1040.6px;">Type here to search</span>
<span class="t" style="font-size: 21px; color: rgb(255, 255, 255); letter-spacing: 0px; left: 1521px; transform: scaleX(0.959); top: 1041.3px;">27°C</span>
<span class="t" style="font-size: 18.5px; color: rgb(255, 255, 255); letter-spacing: 0px; left: 1761px; transform: scaleX(0.9504); top: 1027.5px;">20:25</span>
<span class="t" style="font-size: 18.5px; color: rgb(255, 255, 255); letter-spacing: 0.141px; left: 1736px; top: 1055.5px;">15/09/2021</span>



</body></html>
